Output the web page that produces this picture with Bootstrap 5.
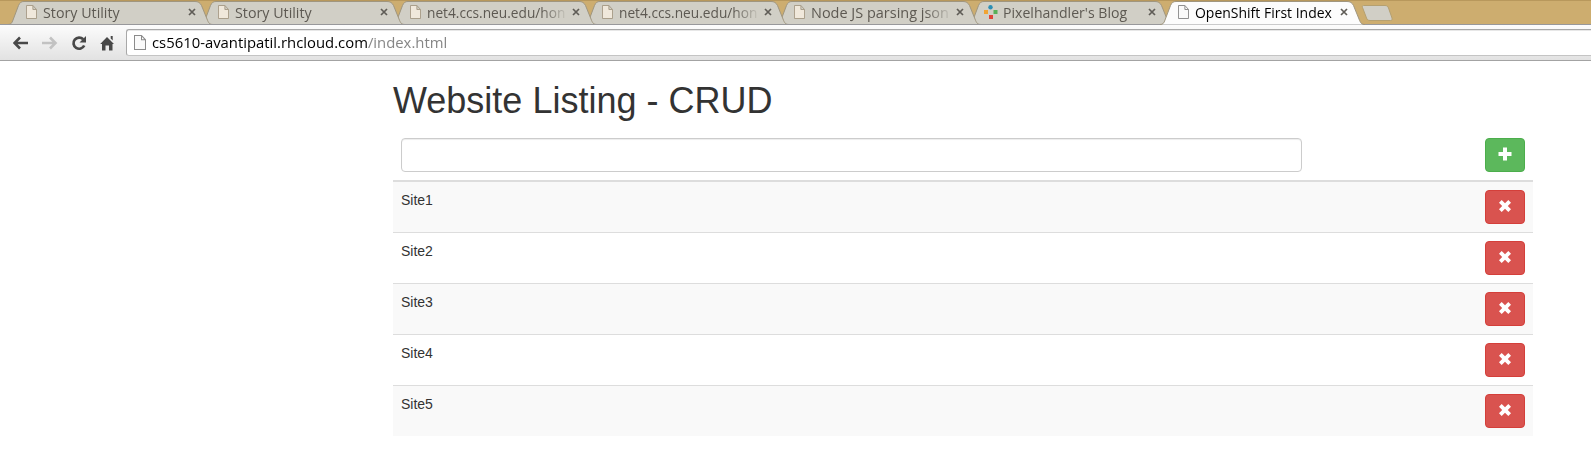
<!DOCTYPE html>
<html lang="en">
<head>
<meta charset="utf-8">
<title>OpenShift First Index</title>
<link href="https://cdn.jsdelivr.net/npm/bootstrap@5.3.0/dist/css/bootstrap.min.css" rel="stylesheet">
<style>
  body { font: 14px/20px "Liberation Sans", Arial, sans-serif; color: #333; background: #fff; overflow: hidden; }
  .strip { height: 25px; background: #cdad6f; border-top: 1px solid #b8985c; border-bottom: 1px solid #98989b; padding-left: 10px; }
  .tab { width: 192px; height: 24px; margin-top: -1px; padding: 0 6px 0 16px; font: 15px/24px "Open Sans", sans-serif; color: #5d5952; flex: none; }
  .tab .shape { position: absolute; left: -2px; top: 0; z-index: -1; }
  .tab svg { flex: none; }
  .tab-title { width: 139px; margin-left: 6px; white-space: nowrap; height: 24px; }
  .fade-end { -webkit-mask-image: linear-gradient(90deg, #000 82%, rgba(0,0,0,.15) 99%); mask-image: linear-gradient(90deg, #000 82%, rgba(0,0,0,.15) 99%); }
  .tab-title span, .address span { display: inline-block; transform-origin: 0 50%; }
  .toolbar { height: 36px; background: linear-gradient(#fcfcfc, #e2e2e2); border-bottom: 1px solid #a3a3a3; }
  .tools { width: 126px; padding-left: 13px; gap: 13px; flex: none; }
  .address { height: 27px; margin-top: 4px; background: #fff; border: 1px solid #a8a8a8; border-bottom-color: #c4c4c4; border-right: 0; border-radius: 3px 0 0 3px; box-shadow: inset 0 1px 0 #e7e7e7; padding-left: 7px; font: 15px/25px "Open Sans", sans-serif; color: #000; white-space: nowrap; }
  .address i { font-style: normal; color: #868686; }
  .url { margin-left: 6px; }
  .page { width: 1140px; margin-left: 393px; }
  h1 { font-size: 36px; line-height: 40px; margin: 20px 0 9px; color: #333; }
  .line-row { padding: 8px; border-top: 1px solid #ddd; height: 51px; }
  .line-row:nth-child(even) { background: #f9f9f9; }
  .line-row.entry { border-top: 0; height: 50px; }
  .line-row.first { border-top-width: 2px; height: 52px; }
  .entry .form-control { width: 901px; height: 34px; border: 1px solid #ccc; border-radius: 4px; box-shadow: inset 0 1px 1px rgba(0,0,0,.075); }
  .act { width: 40px; height: 34px; padding: 0; border-radius: 4px; display: flex; align-items: center; justify-content: center; }
  .act svg { margin-top: -2px; }
  .btn-success { background: #5cb85c; border-color: #4cae4c; }
  .btn-success svg { margin-left: -1px; }
  .btn-danger { background: #d9534f; border-color: #d43f3a; }
</style>
</head>
<body>
<svg width="0" height="0" class="position-absolute">
  <defs>
    <symbol id="tabshape" viewBox="0 0 206 25"><path d="M0 24.500C3 24.500 4 23 5 20L10.500 5.500C12 2.500 13 1.500 16 1.500H187C190 1.500 192 2.500 193.500 5.500L199 19C200.500 23 201.500 24.500 205 24.500"/></symbol>
    <symbol id="doc" viewBox="0 0 12 14"><path d="M.5.500H7.500L11.500 4.500V13.500H.5ZM7.500.500V4.500H11.500"/></symbol>
    <symbol id="x" viewBox="0 0 8 8"><path d="M1 1L7 7M7 1L1 7" fill="none" stroke-width="1.700"/></symbol>
    <symbol id="cross" viewBox="0 0 12 12"><path d="M0 2.700L2.700 0 6 3.200 9.300 0 12 2.700 8.800 6 12 9.300 9.300 12 6 8.800 2.700 12 0 9.300 3.200 6Z" fill="#fff"/></symbol>
  </defs>
</svg>

<header>
  <div class="strip d-flex" id="strip"></div>
  <div class="toolbar d-flex">
    <div class="tools d-flex align-items-center">
      <svg width="16" height="16" viewBox="0 0 16 16" fill="none" stroke="#484848" stroke-width="2.600"><path d="M15 8H2M7 2.500L1.500 8 7 13.500"/></svg>
      <svg width="16" height="16" viewBox="0 0 16 16" fill="none" stroke="#c2c2c2" stroke-width="2.600"><path d="M0 8H13M8 2.500L13.500 8 8 13.500"/></svg>
      <svg width="16" height="16" viewBox="0 0 16 16"><path d="M12.200 4.300A5.600 5.600 0 1 0 13.200 10.500" fill="none" stroke="#484848" stroke-width="2.700"/><path d="M15 1V7.500H8.500Z" fill="#484848"/></svg>
      <svg width="15" height="16" viewBox="0 0 15 16"><path d="M7 2L14 9H12.500V15.500H9V10.500H5.500V15.500H2V9H.2ZM10.700 1H12.700V5.500L10.700 3.500Z" fill="#484848"/></svg>
    </div>
    <div class="address d-flex flex-grow-1 align-items-center">
      <svg width="12" height="15" viewBox="0 0 12 14" preserveAspectRatio="none" fill="#fafafa" stroke="#8b8b8b"><use href="#doc"/></svg>
      <div class="url"><span data-w="295">cs5610-avantipatil.rhcloud.com<i>/index.html</i></span></div>
    </div>
  </div>
</header>

<main class="page">
  <h1 class="fw-normal">Website Listing - CRUD</h1>
  <div id="list">
    <div class="line-row entry d-flex justify-content-between">
      <input class="form-control" type="text" aria-label="Site">
      <button class="btn btn-success act" aria-label="Add"><svg width="14" height="14" viewBox="0 0 14 14"><path d="M5 .5H9V5H13.500V9H9V13.500H5V9H.5V5H5Z" fill="#fff"/></svg></button>
    </div>
  </div>
</main>

<script>
  const tabs = [
    ['Story Utility', 77], ['Story Utility', 77], ['net4.ccs.neu.edu/hon', 138], ['net4.ccs.neu.edu/hon', 138],
    ['Node JS parsing json', 138], ["Pixelhandler's Blog", 124], ['OpenShift First Index', 137]
  ];
  const logo = '<svg width="14" height="14" viewBox="0 0 14 14" style="margin:0 -1px 0 -2px"><circle cx="6.500" cy="2.300" r="2.200" fill="#2c8fb5"/><rect y="5" width="4" height="4" fill="#f0a332"/><rect x="9.500" y="5" width="4" height="4" fill="#58b058"/><rect x="5" y="10" width="4" height="4" fill="#df4438"/></svg>';
  const strip = document.getElementById('strip');
  tabs.forEach(([title, w], i) => {
    const on = i === 6, faded = i > 1 && i < 5;
    strip.insertAdjacentHTML('beforeend',
      `<div class="tab d-flex align-items-center position-relative ${on ? 'text-black' : ''}" style="z-index:${on ? 20 : 10 - i}">
        <svg class="shape" width="206" height="${on ? 25 : 24}" viewBox="0 0 206 ${on ? 25 : 24}" fill="${on ? '#fcfcfc' : '#d1cfc6'}" stroke="#a0967f"><use href="#tabshape" width="206" height="25"/></svg>
        ${i === 5 ? logo : `<svg width="11" height="14" viewBox="0 0 12 14" preserveAspectRatio="none" fill="${on ? '#fafafa' : '#f0e8db'}" stroke="${on ? '#8b8b8b' : '#a79c88'}"><use href="#doc"/></svg>`}
        <div class="tab-title ${faded ? 'fade-end' : ''}"><span data-w="${w}">${title}</span></div>
        <svg width="8" height="8" class="ms-auto" stroke="#5f5c56"><use href="#x"/></svg>
      </div>`);
  });
  strip.insertAdjacentHTML('beforeend', '<svg width="32" height="17" class="flex-shrink-0" style="margin:4px 0 0 7px" viewBox="0 0 32 17"><path d="M2.500.5H24C26 .5 27 1.500 27.500 3L31 13C31.500 14.500 31 15.500 29.500 15.500H9C7 15.500 6 14.500 5.500 13L1.500 2.500C1 1 1.500.5 2.500.5Z" fill="#d1cfc6" stroke="#b5a070"/></svg>');

  const list = document.getElementById('list');
  for (let n = 1; n <= 5; n++) {
    list.insertAdjacentHTML('beforeend',
      `<div class="line-row d-flex justify-content-between ${n === 1 ? 'first' : ''}"><span>Site${n}</span>
       <button class="btn btn-danger act" aria-label="Remove"><svg width="12" height="12"><use href="#cross"/></svg></button></div>`);
  }
  // Condense interface labels to their set widths
  document.querySelectorAll('[data-w]').forEach(e => {
    e.style.transform = `scaleX(${e.dataset.w / e.offsetWidth})`;
  });
</script>
<script src="https://cdn.jsdelivr.net/npm/bootstrap@5.3.0/dist/js/bootstrap.bundle.min.js"></script>
</body>
</html>
